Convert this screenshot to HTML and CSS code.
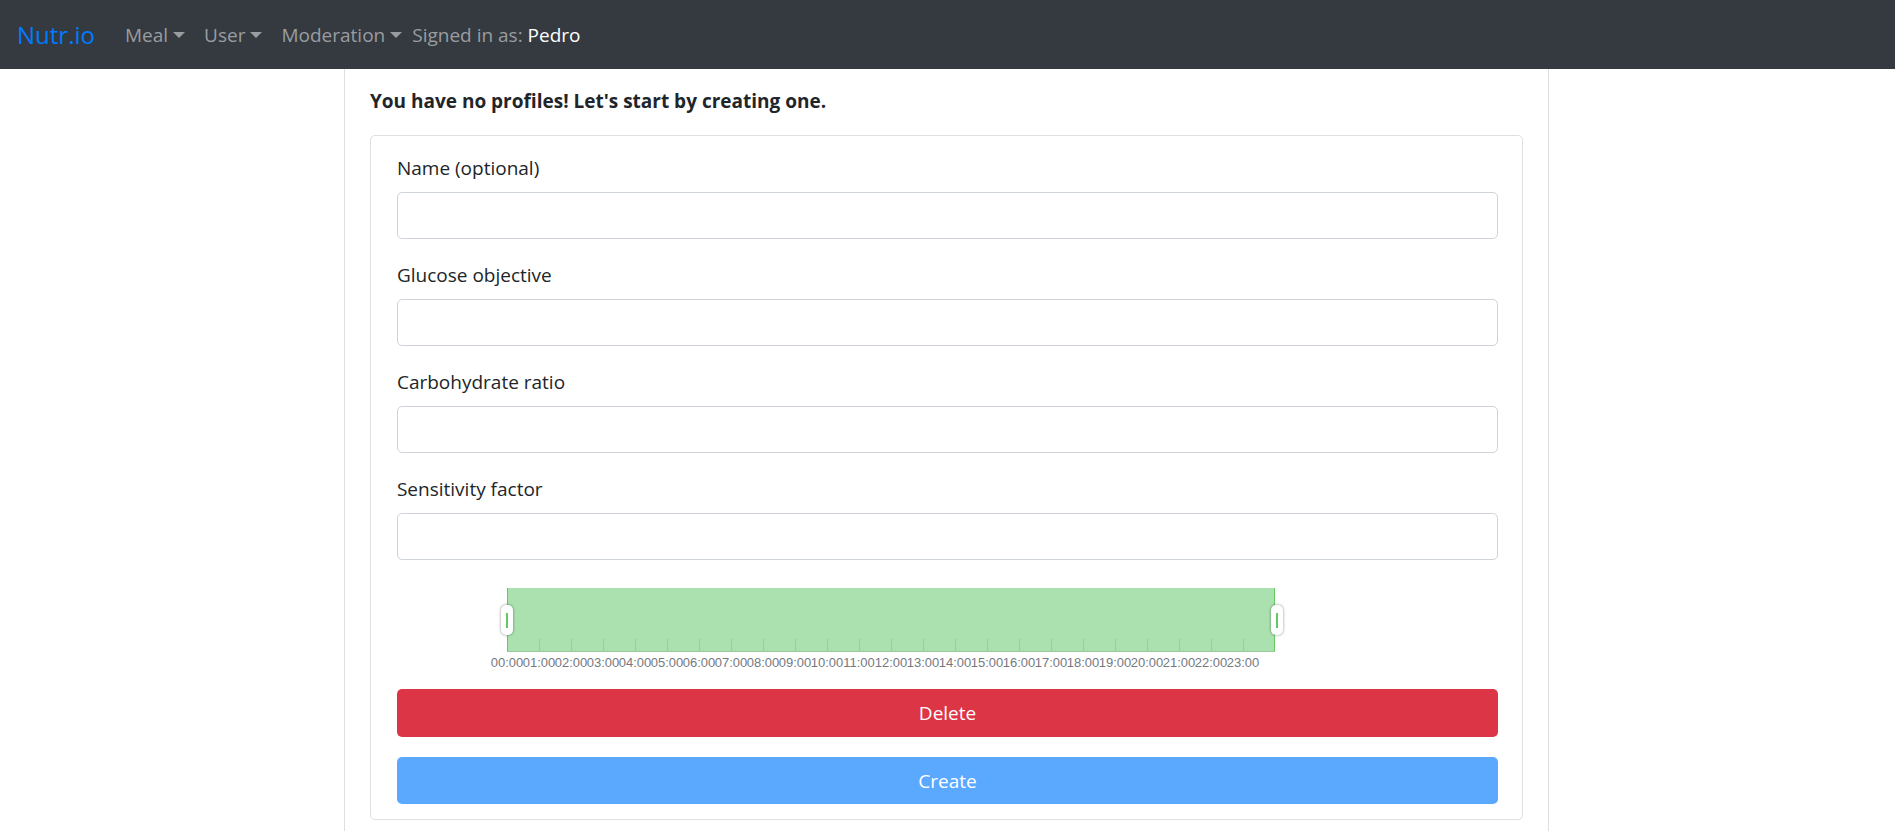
FILE: index.html
```html
<!DOCTYPE html>
<html lang="en">
<head>
<meta charset="utf-8">
<title>Nutr.io</title>
<link rel="stylesheet" href="styles.css">
</head>
<body>
<nav class="navbar">
  <a class="brand" href="#">Nutr.io</a>
  <button class="nav-item" type="button">Meal</button>
  <button class="nav-item" type="button">User</button>
  <button class="nav-item" type="button">Moderation</button>
  <span class="signed-in">Signed in as: <a href="#">Pedro</a></span>
</nav>
<main class="panel">
  <h1 class="title">You have no profiles! Let's start by creating one.</h1>
  <form class="card">
    <div class="field"><label for="name">Name (optional)</label><input id="name" type="text"></div>
    <div class="field"><label for="glucose">Glucose objective</label><input id="glucose" type="text"></div>
    <div class="field"><label for="carbs">Carbohydrate ratio</label><input id="carbs" type="text"></div>
    <div class="field"><label for="sensitivity">Sensitivity factor</label><input id="sensitivity" type="text"></div>
    <div class="time-range">
      <div class="track">
        <i></i><i></i><i></i><i></i><i></i><i></i><i></i><i></i><i></i><i></i><i></i><i></i>
        <i></i><i></i><i></i><i></i><i></i><i></i><i></i><i></i><i></i><i></i><i></i><i></i>
        <input class="handle" type="range" min="0" max="24" value="0" aria-label="Start time">
        <input class="handle" type="range" min="0" max="24" value="24" aria-label="End time">
      </div>
      <div class="hours">
        <span>00:00</span><span>01:00</span><span>02:00</span><span>03:00</span><span>04:00</span><span>05:00</span>
        <span>06:00</span><span>07:00</span><span>08:00</span><span>09:00</span><span>10:00</span><span>11:00</span>
        <span>12:00</span><span>13:00</span><span>14:00</span><span>15:00</span><span>16:00</span><span>17:00</span>
        <span>18:00</span><span>19:00</span><span>20:00</span><span>21:00</span><span>22:00</span><span>23:00</span>
      </div>
    </div>
    <button class="btn delete" type="button">Delete</button>
    <button class="btn create" type="button">Create</button>
  </form>
</main>
</body>
</html>
```
FILE: styles.css
```css
* { box-sizing: border-box; }
html { height: 100%; }
body {
  display: flex;
  flex-direction: column;
  min-height: 100%;
  margin: 0;
  background: #fff;
  color: #212529;
  font: 19px/30px "Segoe UI", "Open Sans", sans-serif;
}
a { text-decoration: none; }
.navbar {
  display: flex;
  align-items: center;
  height: 69px;
  padding: 0 17px;
  background: #343a40;
}
.brand { margin-right: 20px; color: #007bff; font-size: 24px; }
.nav-item {
  display: flex;
  align-items: center;
  gap: 5px;
  padding: 0 10px;
  border: 0;
  background: none;
  color: #9a9da0;
  font: inherit;
}
.nav-item + .nav-item { padding-left: 9px; }
.nav-item::after {
  content: "";
  border: 6px solid transparent;
  border-top-color: #9a9da0;
  border-bottom: 0;
}
.signed-in { color: #9a9da0; }
.signed-in a { color: #fff; }
.panel {
  flex: 1;
  width: 63.6%;
  margin-left: 18.15%;
  padding: 17px 25px 0;
  border: solid #dfdfdf;
  border-width: 0 1px;
}
.title { margin: 0 0 19px; font-size: 19px; font-weight: 700; }
.card {
  padding: 16px 24px 15px 26px;
  border: 1px solid #dfdfdf;
  border-radius: 5px;
}
.field { margin-bottom: 20px; }
.field label { display: block; margin-bottom: 8px; line-height: 32px; }
.field input {
  display: block;
  width: 100%;
  height: 47px;
  padding: 0 15px;
  border: 1px solid #ced4da;
  border-radius: 5px;
  font: inherit;
}
.time-range { width: 768px; margin: 28px 0 15px 10%; }
.track {
  position: relative;
  display: flex;
  align-items: flex-end;
  height: 64px;
  border-bottom: 1px solid #98cb9d;
  background: #abe1af;
  box-shadow: inset 1px 0 #64c864, inset -1px 0 #64c864;
}
.track i { flex: 1 1 0; height: 12px; box-shadow: inset 1px 0 #98cb9d; }
.track i:first-child { box-shadow: none; }
.handle {
  position: absolute;
  top: 17px;
  left: -6px;
  width: 782px;
  height: 30px;
  margin: 0;
  appearance: none;
  background: none;
  pointer-events: none;
}
.handle::-webkit-slider-thumb {
  appearance: none;
  width: 12px;
  height: 30px;
  border-radius: 5px;
  background: linear-gradient(#64c864, #64c864) center / 2px 15px no-repeat #fff;
  box-shadow: 0 0 3px rgba(0, 0, 0, .45);
  pointer-events: auto;
}
.hours {
  display: flex;
  margin-left: -16px;
  color: #76797f;
  font: 13px/22px "Liberation Sans", Arial, sans-serif;
}
.hours span { width: 32px; flex: none; display: flex; justify-content: center; }
.btn {
  display: block;
  width: 100%;
  height: 48px;
  border: 0;
  border-radius: 5px;
  color: #fff;
  font: inherit;
}
.delete { margin-bottom: 20px; background: #dc3545; }
.create { height: 47px; background: #5aa9ff; }
```
